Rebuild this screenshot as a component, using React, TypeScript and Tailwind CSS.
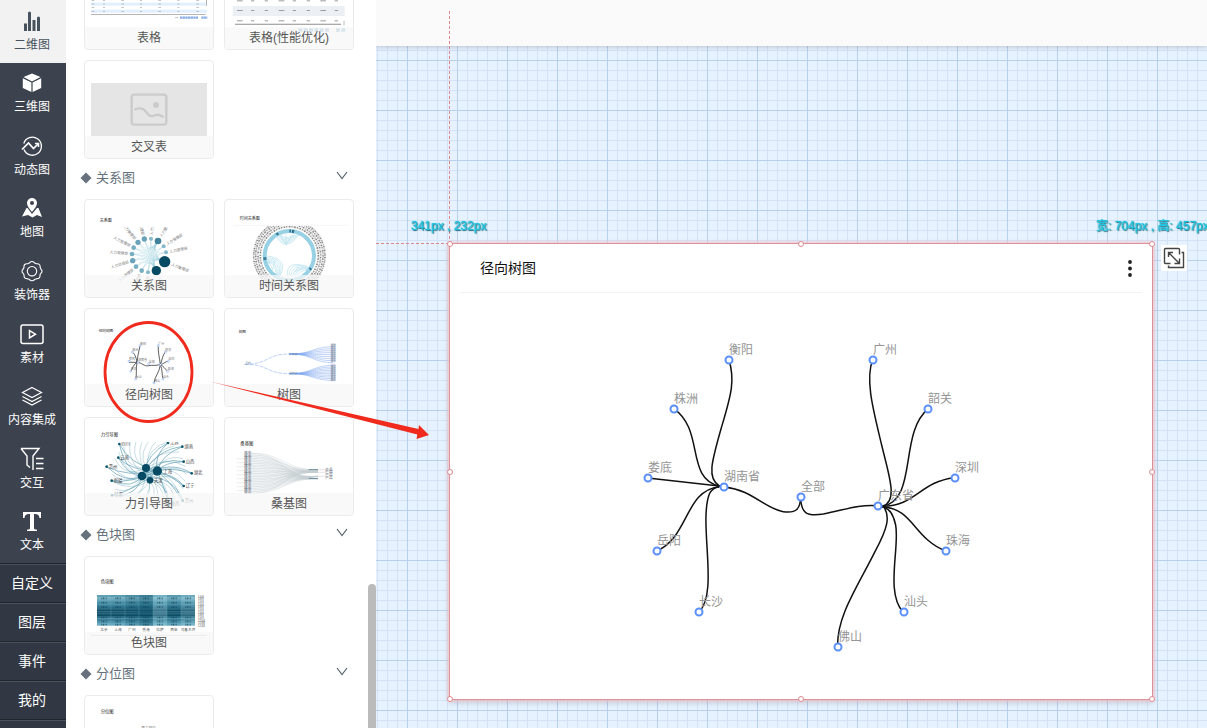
import type { ReactNode } from "react";

const FONT = "font-['Liberation_Sans','Noto_Sans_CJK_SC',sans-serif]";

type NavItem = {
  label: string;
  icon: ReactNode;
  active?: boolean;
};

const NAV_ITEMS: NavItem[] = [
  {
    label: "二维图",
    active: true,
    icon: (
      <svg viewBox="0 0 24 24" className="h-6 w-6" fill="#46525e">
        <path d="M4 14.500h3V22H4zM8 4a1.500 1.500 0 0 1 3 0v18H8zM12.500 11h3v11h-3zM17 9a1.500 1.500 0 0 1 3 0v13h-3z" />
      </svg>
    ),
  },
  {
    label: "三维图",
    icon: (
      <svg viewBox="0 0 24 24" className="h-6 w-6" fill="white">
        <path d="M12 2.500 20.500 6 12 10.500 3.500 6zM2.800 7.200l8.600 4.400V21L2.800 17zM21.200 7.200l-8.600 4.400V21l8.600-4z" />
      </svg>
    ),
  },
  {
    label: "动态图",
    icon: (
      <svg viewBox="0 0 24 24" className="h-6 w-6" fill="none" stroke="white" strokeWidth="1.300">
        <path d="M3.800 9.500a9 9 0 1 1 .2 6" />
        <path d="M2 15.500 8.500 9l5 5.500L18 10" strokeWidth="1.700" />
        <path d="M15 9.500h3.500V13" strokeWidth="1.500" />
      </svg>
    ),
  },
  {
    label: "地图",
    icon: (
      <svg viewBox="0 0 24 24" className="h-6 w-6">
        <path
          fill="white"
          fillRule="evenodd"
          d="M12 2a5 5 0 0 0-5 5c0 3.500 5 9 5 9s5-5.500 5-9a5 5 0 0 0-5-5zm0 3a2 2 0 1 1 0 4 2 2 0 0 1 0-4z"
        />
        <path fill="white" d="M6.500 12 2 20.500l6-1.500 4.500 2.500L17 19l5 2-3.500-9H17l-5 6-4.500-6z" />
      </svg>
    ),
  },
  {
    label: "装饰器",
    icon: (
      <svg viewBox="0 0 24 24" className="h-6 w-6" fill="none" stroke="white" strokeWidth="1.100">
        <path d="M12 2.500c2 0 2.200 1.500 3.600 2.100 1.400.5 2.600-.4 3.800.9s.4 2.300 1 3.600c.5 1.300 1.600 1.400 1.600 3.100s-1.300 1.800-1.800 3.100c-.5 1.400.3 2.400-.9 3.600s-2.300.4-3.600 1c-1.400.5-1.700 1.800-3.700 1.800s-2.200-1.300-3.600-1.800c-1.400-.6-2.400.2-3.600-1s-.4-2.200-1-3.600C3.300 14 2 13.900 2 12.200s1.200-1.800 1.800-3.100c.5-1.400-.3-2.400.9-3.600s2.300-.4 3.700-.9C9.800 4 10 2.500 12 2.500z" />
        <circle cx="12" cy="12.200" r="4.700" />
      </svg>
    ),
  },
  {
    label: "素材",
    icon: (
      <svg viewBox="0 0 24 24" className="h-6 w-6" fill="none" stroke="white" strokeWidth="1.500">
        <rect x="1" y="3" width="22" height="18.500" rx="2" />
        <path d="M9.500 8.500v7.500l6-3.800z" />
      </svg>
    ),
  },
  {
    label: "内容集成",
    icon: (
      <svg viewBox="0 0 24 24" className="h-6 w-6" fill="none" stroke="white" strokeWidth="1.200">
        <path d="m12 3.500 9.500 5-9.500 5-9.500-5z" />
        <path d="m2.500 12.500 9.500 5 9.500-5M2.500 16l9.500 5 9.500-5" />
      </svg>
    ),
  },
  {
    label: "交互",
    icon: (
      <svg viewBox="0 0 24 24" className="h-6 w-6" fill="none" stroke="white" strokeWidth="1.400">
        <path d="M1 1.500h18l-6 7.500v14M1 1.500 7 9v9l3 2.500" />
        <path d="M16 11.500h7.500M16 16.500h7.500M16 21.500h7.500" />
      </svg>
    ),
  },
  {
    label: "文本",
    icon: (
      <svg viewBox="0 0 24 24" className="h-6 w-6" fill="white">
        <path d="M3 3h18v6h-1.500c-.4-3-1.500-4-4.500-4h-1v14c0 1.300.8 1.700 3 1.700V22H7v-1.300c2.200 0 3-.4 3-1.700V5H9C6 5 4.900 6 4.500 9H3z" />
      </svg>
    ),
  },
];

const TABS = ["自定义", "图层", "事件", "我的"];

const range = (n: number) => Array.from({ length: n }, (_, i) => i);

/* ---------- thumbnails, drawn at three units per pixel ---------- */

const TableThumb = () => (
  <svg viewBox="27 -144 384 291" className="h-full w-full">
    {[-34, -13, 8, 29].map((y) => (
      <rect key={y} x="45" y={y} width="348" height="9" fill="#e2effc" />
    ))}
    {[2, 12, 23, 34].map((y) =>
      [50, 84, 139, 195, 250, 307, 364].map((x, i) => (
        <rect key={`${x}-${y}`} x={x - 3} y={y - 1} width={i % 2 ? 6 : 8} height="2" fill="#a3a8b0" />
      ))
    )}
    <rect x="45" y="42" width="344" height="3" fill="#b5b5b5" />
    <rect x="390" y="-20" width="3" height="38" fill="#b5b5b5" />
    <path d="M297 53h10" stroke="#aaa" strokeWidth="2" />
    <path d="M312 53h54M376 53h18" stroke="#88ade6" strokeWidth="7" strokeDasharray="7 1" />
  </svg>
);

const FastTableThumb = () => (
  <svg viewBox="447 -144 384 291" className="h-full w-full">
    <rect x="470" y="18" width="336" height="30" fill="#eceff3" />
    {[2, 31, 62].map((y) =>
      [490, 532, 573, 615, 657, 699, 740, 783].map((x, i) => (
        <rect key={`${x}-${y}`} x={x - 7} y={y - 1} width={i % 3 ? 10 : 17} height="3" fill="#9a9da3" />
      ))
    )}
    <rect x="477" y="71" width="318" height="4" fill="#aaa" />
    <path d="M804 62v14" stroke="#bbb" strokeWidth="3" />
    <path d="M640 90h24" stroke="#888" strokeWidth="2" strokeDasharray="4 2" />
    <path d="M667 90h92M780 90h28" stroke="#7fb0c8" strokeWidth="10" strokeDasharray="12 4" />
  </svg>
);

const CrossTableThumb = () => (
  <svg viewBox="27 183 384 291" className="h-full w-full">
    <rect x="45" y="249" width="348" height="159" fill="#e5e5e5" />
    <g fill="none" stroke="#cbcbcb" strokeWidth="7">
      <rect x="167" y="284" width="104" height="90" rx="8" />
      <path d="M178 328c32-12 32 18 46 20s18-12 36 2" strokeLinecap="round" />
    </g>
    <circle cx="240" cy="315" r="9" fill="#cbcbcb" />
  </svg>
);

const RELATION_NODES = [
  [246, 153, 10, "#41819a"],
  [225, 146, 6, "#86b9cb"],
  [205, 147, 8, "#6ba3b8"],
  [186, 157, 8, "#6ba3b8"],
  [173, 173, 7, "#78aec1"],
  [168, 192, 7, "#78aec1"],
  [170, 212, 8, "#6ba3b8"],
  [180, 230, 7, "#78aec1"],
  [197, 242, 7, "#78aec1"],
  [216, 247, 6, "#86b9cb"],
  [241, 242, 14, "#064a63"],
  [266, 215, 17, "#064a63"],
  [270, 187, 6, "#86b9cb"],
  [263, 169, 6, "#86b9cb"],
] as const;

const RelationThumb = () => (
  <svg viewBox="27 30 384 291" className="h-full w-full">
    <text x="71" y="95" fontSize="12" fill="#222">关系图</text>
    <clipPath id="relation-clip">
      <rect x="60" y="111" width="330" height="170" />
    </clipPath>
    <g clipPath="url(#relation-clip)">
      {RELATION_NODES.map(([x, y], i) => (
        <g key={i} fill="none" stroke="#a5d5e2" strokeWidth="1">
          <path d={`M${x} ${y}Q219 196 241 242M${x} ${y}Q219 196 266 215M${x} ${y}Q219 196 246 153`} />
        </g>
      ))}
      {RELATION_NODES.map(([x, y, r], i) => {
        const angle = (Math.atan2(y - 197, x - 219) * 180) / Math.PI;
        const flip = Math.abs(angle) > 90;
        return (
          <text
            key={i}
            fontSize="11"
            fill="#777"
            textAnchor={flip ? "end" : "start"}
            transform={`translate(${x} ${y}) rotate(${flip ? angle + 180 : angle}) translate(${flip ? -r - 5 : r + 5} 4)`}
          >
            人力管理部
          </text>
        );
      })}
    </g>
    {RELATION_NODES.map(([x, y, r, fill], i) => (
      <circle key={i} cx={x} cy={y} r={r} fill={fill} />
    ))}
  </svg>
);

const TimeRelationThumb = () => (
  <svg viewBox="447 30 384 291" className="h-full w-full">
    <text x="491" y="89" fontSize="12" fill="#222">时间关系图</text>
    <path d="M471 106h343" stroke="#f0f0f0" strokeWidth="2" />
    <clipPath id="time-clip">
      <rect x="500" y="108" width="280" height="180" />
    </clipPath>
    <g clipPath="url(#time-clip)" fill="none">
      {[87, 94, 101, 107].map((r, i) => (
        <circle
          key={r}
          cx="640"
          cy="197"
          r={r}
          stroke="#8a8a8a"
          strokeWidth="5"
          strokeDasharray={i % 2 ? "2 2 4 2 1 2" : "3 2 1 2 5 3"}
        />
      ))}
      <circle cx="640" cy="197" r="74" stroke="#98d1e4" strokeWidth="12" />
      <circle cx="640" cy="197" r="74" stroke="#2f6f8b" strokeWidth="9" strokeDasharray="5 3 7 500" transform="rotate(-90 640 197)" />
      <circle cx="640" cy="197" r="74" stroke="#3e7f9b" strokeWidth="9" strokeDasharray="8 500" transform="rotate(-122 640 197)" />
      <circle cx="640" cy="197" r="74" stroke="#3e7f9b" strokeWidth="9" strokeDasharray="9 500" transform="rotate(170 640 197)" />
      <circle cx="640" cy="197" r="74" stroke="#2f6f8b" strokeWidth="9" strokeDasharray="6 500" transform="rotate(30 640 197)" />
      <g stroke="#a5d8e8" strokeWidth="1.500">
        {range(6).map((i) => (
          <path
            key={i}
            d={`M${596 + i * 4} 135Q630 ${190 - i * 8} ${668 - i * 3} 135M573 ${198 + i * 5}Q${640 - i * 9} 205 ${612 - i * 2} 258M${634 + i * 5} 258Q${630 + i * 10} ${205 + i * 6} 700 ${232 + i * 2}`}
          />
        ))}
        <path d="M630 165V132M630 165 612 136M630 165l18-29M590 240l-14-34M590 240l6-28M660 240l8-10M655 246l28-14" />
      </g>
    </g>
  </svg>
);

const RadialThumb = () => (
  <svg viewBox="27 27 384 291" className="h-full w-full">
    <text x="68" y="96" fontSize="11" fill="#222">径向树图</text>
    <g fill="none" stroke="#111" strokeWidth="2">
      <path d="M183 187C185 165 190 150 192 137M183 187C180 170 176 162 169 156M183 187h-24M183 187c-10 5-14 20-19 27M183 187c-4 20 0 35-4 50M183 187c14 0 22 14 35 10 10-3 20 2 35-4M253 194c-2-20-8-40-6-57M253 194c6-14 6-28 15-38M253 194c10-2 15-10 24-10M253 194c9 3 14 13 22 20M253 194c7 14 4 30 8 43M253 194c-2 22-18 38-19 55" />
    </g>
    {[
      [192, 137, "衡阳"], [169, 156, "株洲"], [159, 184, "娄底"], [164, 214, "岳阳"], [179, 237, "长沙"],
      [186, 187, "湖南省"], [218, 191, "全部"], [253, 194, ""], [247, 137, "广州"], [268, 156, "韶关"],
      [277, 184, "深圳"], [275, 214, "珠海"], [261, 237, "汕头"], [234, 249, "佛山"],
    ].map(([x, y, label]) => (
      <g key={`${x}-${y}`}>
        <circle cx={x} cy={y} r="3" fill="white" stroke="#6f9cf0" strokeWidth="1.500" />
        <text x={Number(x)} y={Number(y) - 3} fontSize="9" fill="#777">{label}</text>
      </g>
    ))}
  </svg>
);

const TreeThumb = () => (
  <svg viewBox="447 27 384 291" className="h-full w-full">
    <text x="488" y="100" fontSize="11" fill="#222">树图</text>
    <g fill="none" stroke="#7da5ee" strokeWidth="1.500">
      <path d="M506 193C580 193 570 162 640 162M506 193c74 0 64 28 134 28" strokeDasharray="12 3" />
      {range(9).map((i) => (
        <path key={i} d={`M640 162C710 162 710 ${140 + i * 6} 772 ${140 + i * 6}`} />
      ))}
      {range(10).map((i) => (
        <path key={i} d={`M640 221C710 221 710 ${196 + i * 5} 772 ${196 + i * 5}`} />
      ))}
    </g>
    <g fill="#789" fontSize="8">
      <text x="508" y="192">全部</text>
      <text x="640" y="164">广东省</text>
      <text x="640" y="222">湖南省</text>
      {range(9).map((i) => (
        <text key={i} x="764" y={137 + i * 6}>城市</text>
      ))}
      {range(8).map((i) => (
        <text key={i} x="764" y={200 + i * 6}>城市</text>
      ))}
    </g>
    <rect x="764" y="130" width="14" height="54" fill="#8b98b5" opacity="0.35" />
    <rect x="764" y="191" width="14" height="52" fill="#8b98b5" opacity="0.35" />
  </svg>
);

const FORCE_LEAVES = [
  [130, 102, "四川"], [127, 143, "云南"], [92, 170, "贵州"], [107, 212, "新疆"], [108, 256, "甘肃"],
  [276, 99, "江苏"], [319, 110, "湖南"], [323, 155, "山西"], [347, 190, "湖北"], [323, 228, "辽宁"],
  [320, 272, "贵州"], [278, 283, "陕西"],
] as const;

const ForceThumb = () => (
  <svg viewBox="27 24 384 291" className="h-full w-full">
    <text x="74" y="79" fontSize="13" fill="#222">力引导图</text>
    <clipPath id="force-clip">
      <rect x="60" y="96" width="340" height="200" />
    </clipPath>
    <g clipPath="url(#force-clip)">
      <g fill="none" stroke="#5b9cb1" strokeWidth="2">
        {FORCE_LEAVES.map(([x, y], i) => (
          <path
            key={i}
            d={`M${x} ${y}Q${(x + 219) / 2 - (192 - y) / 3} ${(y + 192) / 2 - (x - 219) / 3} 198 198M${x} ${y}Q${(x + 219) / 2 - (192 - y) / 6} ${(y + 192) / 2 - (x - 219) / 6} 244 183`}
          />
        ))}
        {range(30).map((i) => {
          const a = (i / 30) * Math.PI * 2;
          const x = Math.round(219 + Math.cos(a) * 112);
          const y = Math.round(192 + Math.sin(a) * 112);
          const cx = Math.round(219 + Math.cos(a - 0.6) * 76);
          const cy = Math.round(192 + Math.sin(a - 0.6) * 76);
          return <path key={i} opacity="0.5" d={`M${x} ${y}Q${cx} ${cy} ${i % 2 ? "210 174" : "222 211"}`} />;
        })}
      </g>
      {FORCE_LEAVES.map(([x, y, label], i) => (
        <g key={i}>
          <circle cx={x} cy={y} r="4" fill="#0b566f" />
          <text x={x + 6} y={y + 3} fontSize="13" fill="#444">{label}</text>
        </g>
      ))}
    </g>
    <g fill="#064a63">
      <circle cx="210" cy="174" r="12" />
      <circle cx="198" cy="198" r="13" />
      <circle cx="244" cy="183" r="14" />
      <circle cx="222" cy="211" r="10" />
    </g>
    <g fontSize="13" fill="#444">
      <text x="262" y="188">上海</text>
      <text x="234" y="215">天津</text>
    </g>
  </svg>
);

const SankeyThumb = () => (
  <svg viewBox="447 24 384 291" className="h-full w-full">
    <text x="493" y="106" fontSize="13" fill="#222">桑基图</text>
    <g fill="none" stroke="#9aa9b0" strokeWidth="1" opacity="0.6">
      {range(25).map((i) => (
        <path
          key={i}
          d={`M526 ${130 + i * 5}C625 ${130 + i * 5} 625 ${i % 3 === 0 ? 180 : 186} 726 ${i % 3 === 0 ? 180 : 186}M526 ${130 + i * 5}C625 ${130 + i * 5} 625 206 726 ${i % 2 ? 199 : 206}`}
        />
      ))}
      {range(9).map((i) => (
        <path key={i} d={`M482 ${146 + i * 12}h30`} />
      ))}
    </g>
    <path d="M698 179h28M698 205h28" stroke="#3b6d83" strokeWidth="2" />
    <path d="M726 179h20M726 187h20M726 199h20" stroke="#aaa" />
    <g fontSize="11" fill="#4e5a68">
      {range(16).map((i) => (
        <text key={i} x="504" y={132 + i * 8}>城市</text>
      ))}
      {range(4).map((i) => (
        <text key={i} x="748" y={182 + i * 8}>产品</text>
      ))}
    </g>
  </svg>
);

const HEAT_ROWS = ["#5fa2b7", "#78b1c3", "#5a9bb1", "#4990a8", "#3b8099", "#2b6e86", "#0d4c63", "#1e5f77", "#0d4c63", "#2b6e86", "#3b8099", "#5397ae", "#6aabc0"];
const HEAT_COLUMNS = [0, 0.04, 0.22, 0.4, -0.28, 0.08, -0.2];

const HeatThumb = () => (
  <svg viewBox="27 36 384 291" className="h-full w-full">
    <text x="74" y="115" fontSize="13" fill="#222">色块图</text>
    {HEAT_ROWS.map((fill, row) => (
      <rect key={row} x="63" y={150 + row * 7} width="294" height="8" fill={fill} />
    ))}
    {HEAT_COLUMNS.map((shade, i) => (
      <g key={i}>
        <rect
          x={63 + i * 42}
          y="150"
          width="42"
          height="92"
          fill={shade < 0 ? "#a8dced" : "#064a63"}
          opacity={Math.abs(shade)}
        />
        {i > 0 && <path d={`M${63 + i * 42} 150v92`} stroke="#6aa9bf" />}
        <text x={84 + i * 42} y="258" fontSize="11" fill="#555" textAnchor="middle">
          {["北京", "上海", "广州", "香港", "拉萨", "西安", "乌鲁木齐"][i]}
        </text>
        {[160, 173, 186, 218, 229, 239].map((y) => (
          <path key={y} d={`M${75 + i * 42} ${y}h18`} stroke="#0b3f55" strokeWidth="5" strokeDasharray="2 3 4 2" opacity="0.65" />
        ))}
      </g>
    ))}
    <path d="M63 166h294M63 207h294M63 220h294M63 194h294" stroke="#9dcadb" opacity="0.7" />
    {range(12).map((i) => (
      <text key={i} x="366" y={158 + i * 8} fontSize="8" fill="#555">{i < 9 ? "1月8" : "12月8"}</text>
    ))}
    <path d="M45 271h348" stroke="#c5c5c5" strokeWidth="3" />
  </svg>
);

const QuantileThumb = () => (
  <svg viewBox="27 453 384 291" className="h-full w-full">
    <text x="74" y="505" fontSize="13" fill="#222">分位图</text>
    <text x="196" y="552" fontSize="11" fill="#777">南丁格尔</text>
  </svg>
);

type Chart = { label: string; thumb: ReactNode };

const SECTIONS: { title: string | null; charts: Chart[] }[] = [
  {
    title: null,
    charts: [
      { label: "表格", thumb: <TableThumb /> },
      { label: "表格(性能优化)", thumb: <FastTableThumb /> },
      { label: "交叉表", thumb: <CrossTableThumb /> },
    ],
  },
  {
    title: "关系图",
    charts: [
      { label: "关系图", thumb: <RelationThumb /> },
      { label: "时间关系图", thumb: <TimeRelationThumb /> },
      { label: "径向树图", thumb: <RadialThumb /> },
      { label: "树图", thumb: <TreeThumb /> },
      { label: "力引导图", thumb: <ForceThumb /> },
      { label: "桑基图", thumb: <SankeyThumb /> },
    ],
  },
  { title: "色块图", charts: [{ label: "色块图", thumb: <HeatThumb /> }] },
  { title: "分位图", charts: [{ label: "", thumb: <QuantileThumb /> }] },
];

const Sidebar = () => (
  <nav className="flex w-[66px] shrink-0 flex-col bg-[#323843] text-white">
    <div className="flex h-[563px] shrink-0 flex-col bg-[#3c424e]">
      {NAV_ITEMS.map((item) => (
        <button
          key={item.label}
          className={`flex flex-1 flex-col items-center justify-center gap-1 pr-0.5 pb-px text-xs leading-4 whitespace-nowrap ${
            item.active ? "bg-[#f2f2f2] text-[#46525e]" : ""
          }`}
        >
          {item.icon}
          {item.label}
        </button>
      ))}
    </div>
    {TABS.map((tab) => (
      <button
        key={tab}
        className="h-[39px] shrink-0 border-t border-[#20242b] pr-0.5 text-sm shadow-[inset_0_1px_0_#4c525d]"
      >
        {tab}
      </button>
    ))}
    <div className="h-[39px] shrink-0 border-t border-[#20242b] shadow-[inset_0_1px_0_#4c525d]" />
  </nav>
);

const ChartCard = ({ label, thumb }: Chart) => (
  <button className="relative h-[99px] overflow-hidden rounded border border-[#ebebeb] bg-white">
    {thumb}
    <span className="absolute inset-x-0 bottom-0 h-[22px] bg-[#f7f7f7]/75 text-xs leading-[22px] text-[#555]">
      {label}
    </span>
  </button>
);

const ChartPanel = () => (
  <aside className="relative w-[310px] shrink-0 overflow-hidden bg-white">
    <div className="-mt-[49px] pr-[22px] pl-[18px]">
      {SECTIONS.map((section, i) => (
        <section key={i}>
          {section.title && (
            <button className="-ml-1 flex h-10 w-[268px] items-center pb-0.5 text-left text-[13px] text-[#65717c]">
              <svg viewBox="0 0 12 12" className="mr-1 h-3 w-3" fill="#65717c">
                <path d="m6 .5 5.500 5.500L6 11.500.5 6z" />
              </svg>
              <span className="flex-1">{section.title}</span>
              <svg viewBox="0 0 12 12" className="mb-1.5 h-3 w-3" fill="none" stroke="#555f69" strokeWidth="1.200">
                <path d="m1 3 5 6.500L11 3" />
              </svg>
            </button>
          )}
          <div className="grid grid-cols-2 gap-2.5">
            {section.charts.map((chart) => (
              <ChartCard key={chart.label} {...chart} />
            ))}
          </div>
        </section>
      ))}
    </div>
    <div className="absolute top-[584px] right-0 bottom-0 w-2 rounded-t bg-[#bbb]" />
  </aside>
);

/* ---------- selected widget ---------- */

const CITY_NODES = [
  [279, 67, "衡阳"],
  [224, 116, "株洲"],
  [198, 185, "娄底"],
  [207, 258, "岳阳"],
  [249, 319, "长沙"],
  [274, 194, "湖南省"],
  [351, 204, "全部"],
  [428, 213, "广东省"],
  [423, 67, "广州"],
  [478, 116, "韶关"],
  [505, 185, "深圳"],
  [496, 258, "珠海"],
  [454, 319, "汕头"],
  [388, 354, "佛山"],
] as const;

const LINKS = [
  "M297 89C315 150 305 190 275 290C245 395 230 445 268 468L283 471",
  "M131 236C225 300 165 445 268 468",
  "M53 444L268 468",
  "M80 663C175 625 165 480 268 470",
  "M206 847C268 790 205 580 238 492Q248 472 268 470",
  "M283 471C370 480 400 535 460 545C500 551 512 535 512 499",
  "M512 499C512 550 530 560 580 552C645 540 680 523 743 527",
  "M728 89C705 150 730 240 755 345C778 440 805 515 757 529",
  "M895 236C805 310 865 510 757 529",
  "M973 443C870 455 855 530 757 529",
  "M947 663C850 625 850 535 757 531",
  "M820 847C765 790 810 650 797 585Q787 535 757 531",
  "M623 950C620 860 680 775 735 665C775 590 780 560 762 531",
];

const RadialTree = () => (
  <svg viewBox="0 0 702 406" className="min-h-0 w-full flex-1">
    <g transform="translate(180 37) scale(0.3333)" fill="none" stroke="#111" strokeWidth="4.500">
      {LINKS.map((d) => (
        <path key={d} d={d} />
      ))}
    </g>
    {CITY_NODES.map(([x, y, label]) => (
      <g key={label}>
        <circle cx={x} cy={y} r="3.500" fill="white" stroke="#5b8ff9" strokeWidth="2" />
        <text x={x} y={y - 6} fontSize="12" fill="#959595">{label}</text>
      </g>
    ))}
  </svg>
);

const HANDLES = [
  "left-0 top-0",
  "left-1/2 top-0",
  "left-full top-0",
  "left-0 top-1/2",
  "left-full top-1/2",
  "left-0 top-full",
  "left-1/2 top-full",
  "left-full top-full",
];

const Widget = () => (
  <div className="absolute top-[243px] left-[73px] flex h-[457px] w-[704px] flex-col border border-[#dd9297] bg-white shadow-[0_0_3px_1px_#f5c5cc,0_3px_6px_rgba(0,0,0,0.15)]">
    <header className="mx-2.5 flex h-[49px] items-center justify-between border-b border-[#f3f3f3] pl-5">
      <h1 className="text-sm text-[#111]">径向树图</h1>
      <button aria-label="更多" className="flex h-6 w-6 items-center justify-center">
        <svg viewBox="0 0 4 18" className="h-[18px] w-1" fill="#222">
          <circle cx="2" cy="3" r="1.900" />
          <circle cx="2" cy="9.500" r="1.900" />
          <circle cx="2" cy="16" r="1.900" />
        </svg>
      </button>
    </header>
    <RadialTree />
    {HANDLES.map((pos) => (
      <span
        key={pos}
        className={`absolute h-1.5 w-1.5 -translate-x-1/2 -translate-y-1/2 rounded-full border border-[#e08a8f] bg-white ${pos}`}
      />
    ))}
  </div>
);

const HINT =
  "absolute top-[218px] text-xs leading-4 whitespace-nowrap text-[#1cc4e0] [text-shadow:0_0_1px_#1cc4e0,1px_1px_1px_#235a68]";

const Canvas = () => (
  <main className="relative flex min-w-0 flex-1 flex-col overflow-hidden">
    <div className="z-0 h-[46px] shrink-0 bg-[#fafafa] shadow-[0_1px_5px_rgba(0,0,0,0.2)]" />
    <div className="-z-10 flex-1 bg-[#e6f2ff] [background-image:linear-gradient(#b9d0ec_1px,transparent_1px),linear-gradient(90deg,#b9d0ec_1px,transparent_1px),linear-gradient(#d3e3f5_1px,transparent_1px),linear-gradient(90deg,#d3e3f5_1px,transparent_1px)] [background-position:31px_14px,31px_14px,1px_4px,1px_4px] [background-size:50px_50px,50px_50px,10px_10px,10px_10px]" />
    <div className="absolute top-[11px] left-[73px] h-[232px] w-px bg-[repeating-linear-gradient(#e0878b_0_3px,transparent_3px_5px)]" />
    <div className="absolute top-[243px] left-0 h-px w-[73px] bg-[repeating-linear-gradient(90deg,#e0878b_0_3px,transparent_3px_5px)]" />
    <span className={`${HINT} left-[35px]`}>341px , 232px</span>
    <span className={`${HINT} left-[720px]`}>宽: 704px , 高: 457px</span>
    <Widget />
    <button
      aria-label="缩放"
      className="absolute top-[245px] left-[785px] flex h-[26px] w-[26px] items-center justify-center bg-white"
    >
      <svg viewBox="0 0 24 24" className="h-6 w-6" fill="none" stroke="#444" strokeWidth="1.400">
        <path d="M8.500 17.500H3.500Q2.500 17.500 2.500 16.500V3.500Q2.500 2.500 3.500 2.500H16.500Q17.500 2.500 17.500 3.500V8.500" />
        <path d="M6.500 11V6.500H11M6.500 6.500l11 11M17.500 12.500v5h-5" />
        <path d="M19.500 6.500h2v15H6.500v-2" />
      </svg>
    </button>
  </main>
);

export default function App() {
  return (
    <div className={`relative isolate flex h-screen overflow-hidden ${FONT}`}>
      <Sidebar />
      <ChartPanel />
      <Canvas />
      {/* hand-drawn hint: drag the thumbnail onto the canvas */}
      <svg viewBox="0 0 440 450" className="pointer-events-none absolute top-0 left-0 h-[450px] w-[440px]">
        <ellipse cx="148.500" cy="372" rx="43.500" ry="49.500" fill="none" stroke="#f02a1c" strokeWidth="2.800" />
        <path d="M210 381.500 418.500 429l.5-4 10 10-12.500 4 .8-4.500z" fill="#f02a1c" />
      </svg>
    </div>
  );
}
